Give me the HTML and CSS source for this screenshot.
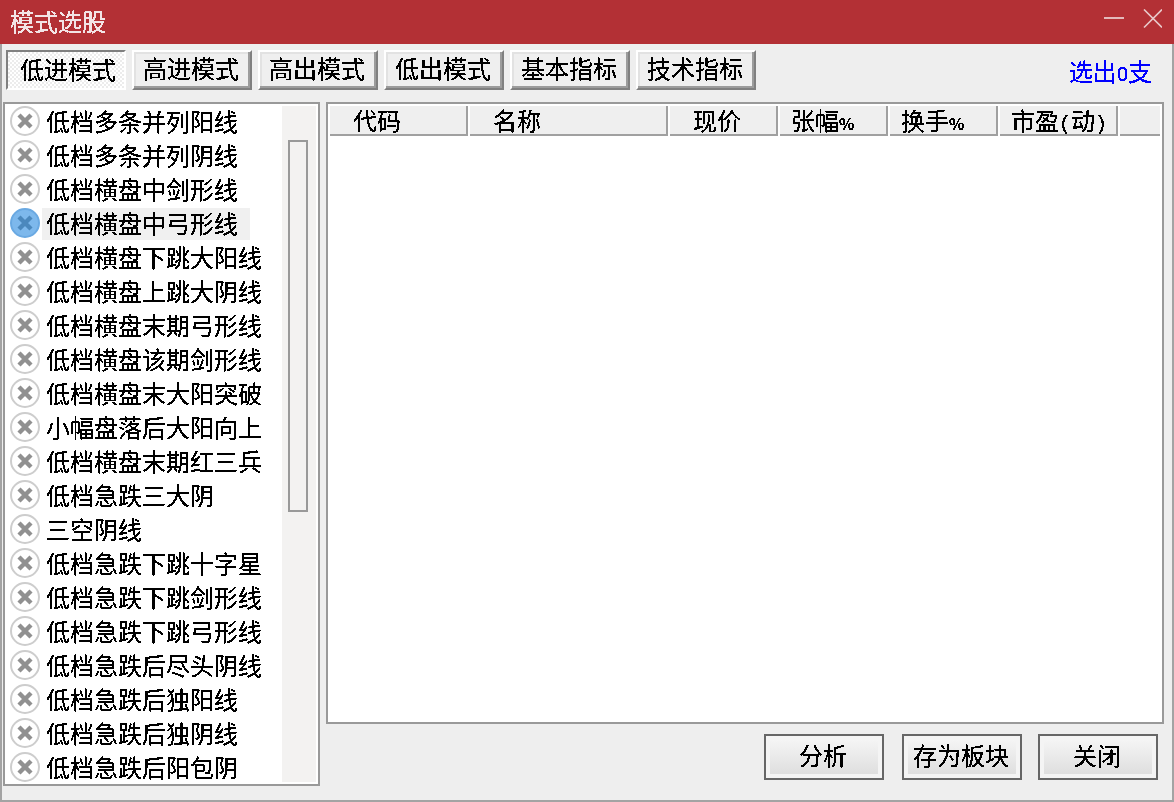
FILE: index.html
```html
<!DOCTYPE html>
<html lang="zh-CN">
<head>
<meta charset="utf-8">
<title>模式选股</title>
<link rel="stylesheet" href="styles.css">
</head>
<body>
<svg class="defs" width="0" height="0" aria-hidden="true">
  <filter id="crisp" x="0" y="0" width="100%" height="100%" color-interpolation-filters="sRGB">
    <feComponentTransfer>
      <feFuncA type="discrete" tableValues="0 1 1"/>
    </feComponentTransfer>
  </filter>
  <symbol id="ico" viewBox="0 0 30 30">
    <circle class="ico-ring" cx="15" cy="15" r="14"/>
    <path class="ico-x" d="M9 9 21 21M21 9 9 21"/>
  </symbol>
</svg>
<div class="window">
  <header class="titlebar">
    <span class="title t">模式选股</span>
    <svg class="win-ctl" width="58" height="20" viewBox="0 0 58 20">
      <path d="M0 9H20" class="min"/>
      <path d="M40 0.5 58 18.5M58 0.5 40 18.5" class="cls"/>
    </svg>
  </header>
  <div class="body">
    <nav class="toolbar">
      <button class="tb pressed"><span class="t">低进模式</span></button>
      <button class="tb"><span class="t">高进模式</span></button>
      <button class="tb"><span class="t">高出模式</span></button>
      <button class="tb"><span class="t">低出模式</span></button>
      <button class="tb"><span class="t">基本指标</span></button>
      <button class="tb"><span class="t">技术指标</span></button>
      <a class="count t">选出<span class="digit">0</span>支</a>
    </nav>
    <main class="main">
      <section class="list">
        <ul class="rows">
          <li class="row"><svg class="ico"><use href="#ico"/></svg><span class="lbl"><span class="t">低档多条并列阳线</span></span></li>
          <li class="row"><svg class="ico"><use href="#ico"/></svg><span class="lbl"><span class="t">低档多条并列阴线</span></span></li>
          <li class="row"><svg class="ico"><use href="#ico"/></svg><span class="lbl"><span class="t">低档横盘中剑形线</span></span></li>
          <li class="row sel"><svg class="ico"><use href="#ico"/></svg><span class="lbl"><span class="t">低档横盘中弓形线</span></span></li>
          <li class="row"><svg class="ico"><use href="#ico"/></svg><span class="lbl"><span class="t">低档横盘下跳大阳线</span></span></li>
          <li class="row"><svg class="ico"><use href="#ico"/></svg><span class="lbl"><span class="t">低档横盘上跳大阴线</span></span></li>
          <li class="row"><svg class="ico"><use href="#ico"/></svg><span class="lbl"><span class="t">低档横盘末期弓形线</span></span></li>
          <li class="row"><svg class="ico"><use href="#ico"/></svg><span class="lbl"><span class="t">低档横盘该期剑形线</span></span></li>
          <li class="row"><svg class="ico"><use href="#ico"/></svg><span class="lbl"><span class="t">低档横盘末大阳突破</span></span></li>
          <li class="row"><svg class="ico"><use href="#ico"/></svg><span class="lbl"><span class="t">小幅盘落后大阳向上</span></span></li>
          <li class="row"><svg class="ico"><use href="#ico"/></svg><span class="lbl"><span class="t">低档横盘末期红三兵</span></span></li>
          <li class="row"><svg class="ico"><use href="#ico"/></svg><span class="lbl"><span class="t">低档急跌三大阴</span></span></li>
          <li class="row"><svg class="ico"><use href="#ico"/></svg><span class="lbl"><span class="t">三空阴线</span></span></li>
          <li class="row"><svg class="ico"><use href="#ico"/></svg><span class="lbl"><span class="t">低档急跌下跳十字星</span></span></li>
          <li class="row"><svg class="ico"><use href="#ico"/></svg><span class="lbl"><span class="t">低档急跌下跳剑形线</span></span></li>
          <li class="row"><svg class="ico"><use href="#ico"/></svg><span class="lbl"><span class="t">低档急跌下跳弓形线</span></span></li>
          <li class="row"><svg class="ico"><use href="#ico"/></svg><span class="lbl"><span class="t">低档急跌后尽头阴线</span></span></li>
          <li class="row"><svg class="ico"><use href="#ico"/></svg><span class="lbl"><span class="t">低档急跌后独阳线</span></span></li>
          <li class="row"><svg class="ico"><use href="#ico"/></svg><span class="lbl"><span class="t">低档急跌后独阴线</span></span></li>
          <li class="row"><svg class="ico"><use href="#ico"/></svg><span class="lbl"><span class="t">低档急跌后阳包阴</span></span></li>
        </ul>
        <div class="track"><div class="thumb"></div></div>
      </section>
      <div class="right">
        <section class="table">
          <div class="thead">
            <div class="th c1 wide"><span class="t">代码</span></div>
            <div class="th c2 wide"><span class="t">名称</span></div>
            <div class="th c3 wide"><span class="t">现价</span></div>
            <div class="th c4"><span class="t">张幅<span class="pct">%</span></span></div>
            <div class="th c4"><span class="t">换手<span class="pct">%</span></span></div>
            <div class="th c5"><span class="t">市盈<span class="latin">(</span>动<span class="latin">)</span></span></div>
            <div class="th c6"></div>
          </div>
        </section>
        <footer class="actions">
          <button class="act first"><span class="t">分析</span></button>
          <button class="act"><span class="t">存为板块</span></button>
          <button class="act"><span class="t">关闭</span></button>
        </footer>
      </div>
    </main>
  </div>
</div>
</body>
</html>
```
FILE: styles.css
```css
* { box-sizing: border-box; }
html, body { margin: 0; padding: 0; }
body {
  width: 1174px;
  height: 802px;
  overflow: hidden;
  background: #eeeeee;
  color: #000;
  font-family: "Noto Sans CJK SC", "Liberation Sans", sans-serif;
  font-size: 24px;
  line-height: 24px;
}
.defs { position: absolute; }
.t { display: inline-block; filter: url(#crisp); white-space: nowrap; }
.window { height: 802px; display: flex; flex-direction: column; }

.titlebar {
  height: 44px;
  flex: none;
  background: #b33035;
  display: flex;
  align-items: center;
  justify-content: space-between;
  padding: 0 12px 0 10px;
}
.title { color: #f3e4e6; margin-top: -2px; }
.win-ctl { display: block; margin-bottom: 6px; }
.win-ctl path { fill: none; stroke-width: 2; }
.win-ctl .min { stroke: #e3b9bb; }
.win-ctl .cls { stroke: #e9c9ca; stroke-width: 1.6; }

.body {
  flex: 1;
  display: flex;
  flex-direction: column;
  min-height: 0;
  border: 2px solid #a3a3a3;
  border-top: 0;
}

button { font: inherit; color: inherit; margin: 0; cursor: default; }

.toolbar {
  flex: none;
  height: 58px;
  padding: 6px 0 12px 4px;
  display: flex;
  gap: 6px;
}
.tb {
  width: 120px;
  height: 40px;
  padding: 0 2px 5px 0;
  background: #efefef;
  border: 2px solid;
  border-color: #fff #808080 #808080 #fff;
  box-shadow: inset -2px -2px 0 #9c9c9c, inset 2px 2px 0 #e2e2e2;
}
.tb.pressed {
  padding: 0 0 2px 4px;
  border-color: #808080 #fff #fff #808080;
  box-shadow: none;
  background: repeating-conic-gradient(#ffffff 0 25%, #ececec 0 50%) 0 0 / 4px 4px;
}
.count {
  margin-left: auto;
  margin-right: 20px;
  align-self: center;
  padding-top: 4px;
  color: #0000ff;
}
.digit { font-family: "Liberation Sans", sans-serif; font-size: 20px; }
.latin { font-family: "Liberation Mono", monospace; font-size: 20px; }

.main { flex: 1; min-height: 0; display: flex; padding-bottom: 14px; gap: 6px; }

.list {
  width: 317px;
  margin-left: 1px;
  flex: none;
  display: flex;
  background: #fff;
  border: 2px solid #999;
  padding-right: 2px;
  overflow: hidden;
}
.rows {
  list-style: none;
  margin: 0;
  padding: 1px 0 0 5px;
  width: 277px;
  flex: none;
  overflow: hidden;
}
.row { height: 34px; display: flex; align-items: center; white-space: nowrap; }
.ico {
  width: 30px;
  height: 30px;
  flex: none;
  margin-top: -2px;
  --ring-fill: #fff;
  --ring-stroke: #cdcdcd;
  --x-stroke: #909090;
}
.row.sel .ico {
  --ring-fill: #7db8ec;
  --ring-stroke: #6aa9e2;
  --x-stroke: #4b88bd;
}
.ico-ring { fill: var(--ring-fill); stroke: var(--ring-stroke); stroke-width: 2; }
.ico-x { fill: none; stroke: var(--x-stroke); stroke-width: 4.4; }
.lbl { display: block; margin-left: 2px; padding: 3px 12px 5px 4px; }
.row.sel .lbl { background: #f0f0f0; }

.track {
  width: 34px;
  flex: none;
  margin: 2px 0;
  padding: 34px 8px 0 6px;
  background: #f3f2f1;
}
.thumb { height: 372px; border: 2px solid #999; }

.right { flex: 1; min-width: 0; display: flex; flex-direction: column; margin-right: 8px; }

.table {
  flex: 1;
  min-height: 0;
  background: #fff;
  border: 2px solid #999;
  padding: 2px;
}
.thead { display: flex; gap: 2px; height: 30px; }
.th {
  background: #efefef;
  border-right: 2px solid #a0a0a0;
  border-bottom: 2px solid #a0a0a0;
  padding: 2px 0 0 11px;
  white-space: nowrap;
}
.th.wide { padding-left: 23px; }
.c1 { width: 138px; }
.c2 { width: 198px; }
.c3 { width: 108px; }
.c4 { width: 108px; }
.c5 { width: 118px; }
.c6 { width: 40px; border-right: 0; }
.pct { display: inline-block; width: 12px; font-size: 16px; font-weight: 700; line-height: 12px; }

.actions {
  flex: none;
  height: 62px;
  padding: 10px 6px 0 0;
  display: flex;
  justify-content: flex-end;
  gap: 16px;
}
.act {
  width: 120px;
  height: 46px;
  padding: 0 2px 4px 0;
  border: 2px solid #666;
  box-shadow: inset 0 0 0 4px #f4f4f4;
  background: linear-gradient(#f7f7f7, #dcdcdc);
}
.act.first { margin-right: 2px; }
```
